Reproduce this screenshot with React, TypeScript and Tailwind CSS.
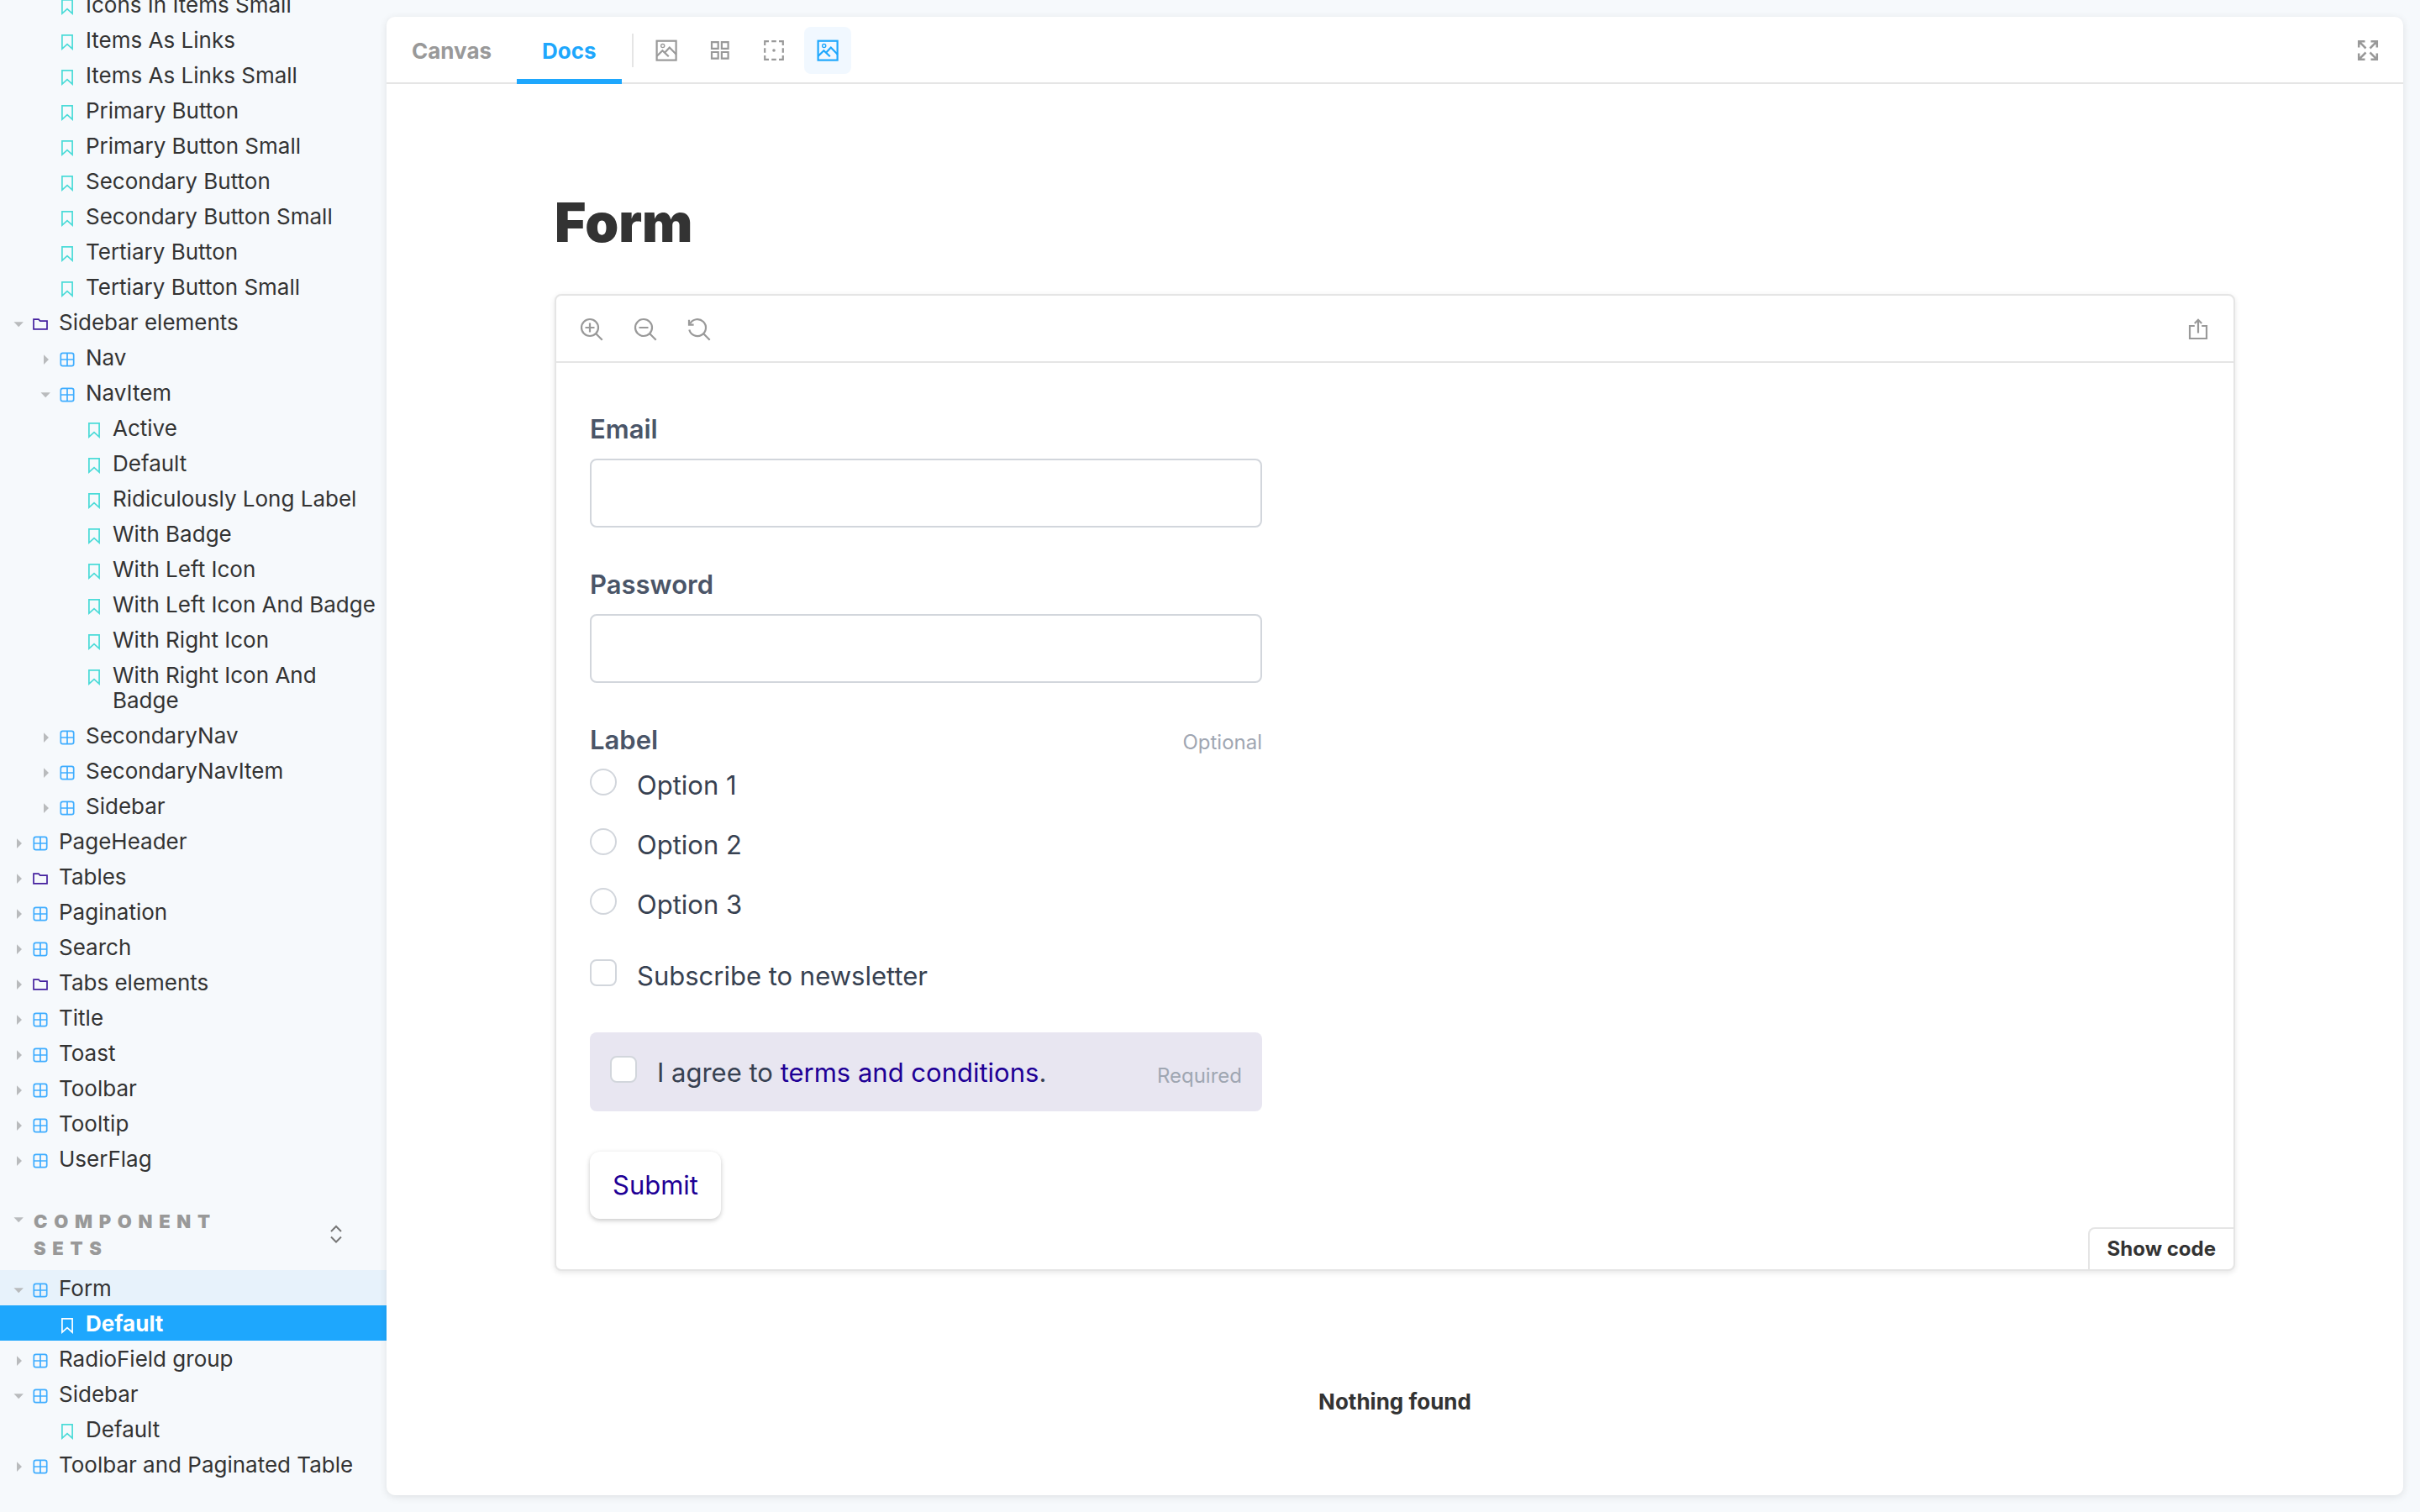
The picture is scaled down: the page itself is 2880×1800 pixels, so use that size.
import React from 'react';

type Kind = 'folder' | 'component' | 'story';
type Item = {
  label: string;
  kind: Kind;
  level: 0 | 1 | 2;
  open?: boolean;
  state?: 'parent' | 'selected';
};

const libraryItems: Item[] = [
  { label: 'Icons In Items Small', kind: 'story', level: 1 },
  { label: 'Items As Links', kind: 'story', level: 1 },
  { label: 'Items As Links Small', kind: 'story', level: 1 },
  { label: 'Primary Button', kind: 'story', level: 1 },
  { label: 'Primary Button Small', kind: 'story', level: 1 },
  { label: 'Secondary Button', kind: 'story', level: 1 },
  { label: 'Secondary Button Small', kind: 'story', level: 1 },
  { label: 'Tertiary Button', kind: 'story', level: 1 },
  { label: 'Tertiary Button Small', kind: 'story', level: 1 },
  { label: 'Sidebar elements', kind: 'folder', level: 0, open: true },
  { label: 'Nav', kind: 'component', level: 1 },
  { label: 'NavItem', kind: 'component', level: 1, open: true },
  { label: 'Active', kind: 'story', level: 2 },
  { label: 'Default', kind: 'story', level: 2 },
  { label: 'Ridiculously Long Label', kind: 'story', level: 2 },
  { label: 'With Badge', kind: 'story', level: 2 },
  { label: 'With Left Icon', kind: 'story', level: 2 },
  { label: 'With Left Icon And Badge', kind: 'story', level: 2 },
  { label: 'With Right Icon', kind: 'story', level: 2 },
  { label: 'With Right Icon And Badge', kind: 'story', level: 2 },
  { label: 'SecondaryNav', kind: 'component', level: 1 },
  { label: 'SecondaryNavItem', kind: 'component', level: 1 },
  { label: 'Sidebar', kind: 'component', level: 1 },
  { label: 'PageHeader', kind: 'component', level: 0 },
  { label: 'Tables', kind: 'folder', level: 0 },
  { label: 'Pagination', kind: 'component', level: 0 },
  { label: 'Search', kind: 'component', level: 0 },
  { label: 'Tabs elements', kind: 'folder', level: 0 },
  { label: 'Title', kind: 'component', level: 0 },
  { label: 'Toast', kind: 'component', level: 0 },
  { label: 'Toolbar', kind: 'component', level: 0 },
  { label: 'Tooltip', kind: 'component', level: 0 },
  { label: 'UserFlag', kind: 'component', level: 0 },
];

const setItems: Item[] = [
  { label: 'Form', kind: 'component', level: 0, open: true, state: 'parent' },
  { label: 'Default', kind: 'story', level: 1, state: 'selected' },
  { label: 'RadioField group', kind: 'component', level: 0 },
  { label: 'Sidebar', kind: 'component', level: 0, open: true },
  { label: 'Default', kind: 'story', level: 1 },
  { label: 'Toolbar and Paginated Table', kind: 'component', level: 0 },
];

const indent = { 0: 'pl-4', 1: 'pl-12', 2: 'pl-20' };

function Caret({ open }: { open?: boolean }) {
  return (
    <svg className="size-3 shrink-0" viewBox="0 0 12 12" fill="#b9bbbd" aria-hidden="true">
      {open ? <path d="M0.5 3.2h11.4L6.2 9.2z" /> : <path d="M4 0.2v11.8L10 6.1z" />}
    </svg>
  );
}

function KindIcon({ kind, selected }: { kind: Kind; selected?: boolean }) {
  if (kind === 'folder') {
    return (
      <svg className="size-5" viewBox="0 0 20 20" fill="none" stroke="#44209e" strokeWidth="1.7" aria-hidden="true">
        <path d="M2 4.2h6l1.8 2h8.2v9.6H2z" />
      </svg>
    );
  }
  if (kind === 'component') {
    return (
      <svg className="size-5" viewBox="0 0 20 20" fill="none" stroke="#3fadff" strokeWidth="1.7" aria-hidden="true">
        <rect x="2.3" y="2.3" width="15.4" height="15.4" rx="2.4" />
        <path d="M10 2.3v15.4M2.3 10h15.4" />
      </svg>
    );
  }
  return (
    <svg
      className={selected ? 'size-5 text-white' : 'size-5 text-[#4bdbd8]'}
      viewBox="0 0 20 20"
      fill="none"
      stroke="currentColor"
      strokeWidth="1.7"
      aria-hidden="true"
    >
      <path d="M3.9 1.9h12.2v16.2L10 12.6l-6.1 5.5z" />
    </svg>
  );
}

function TreeRow({ item }: { item: Item }) {
  const selected = item.state === 'selected';
  const tone = selected
    ? 'bg-[#1ea7fd] font-bold text-white'
    : item.state === 'parent'
      ? 'bg-[#e7f2fb] text-[#333]'
      : 'text-[#333]';
  return (
    <li>
      <a href="#" className={`flex items-start pr-1 ${indent[item.level]} ${tone}`}>
        <span className="-mb-3 flex h-12 w-[52px] shrink-0 items-center gap-[10px]">
          {item.kind === 'story' ? <span className="w-3 shrink-0" /> : <Caret open={item.open} />}
          <KindIcon kind={item.kind} selected={selected} />
        </span>
        <span className="pt-[7px] pb-[5px] pl-[2px] text-[26px] leading-[30px]">{item.label}</span>
      </a>
    </li>
  );
}

function Sidebar() {
  return (
    <nav aria-label="Stories" className="w-[460px] shrink-0 overflow-hidden">
      <ul className="-mt-4">
        {libraryItems.map((item, i) => (
          <TreeRow key={i} item={item} />
        ))}
      </ul>
      <div className="mt-[38px] mb-[10px] flex items-center justify-between pr-[50px] pl-4">
        <button
          type="button"
          className="flex max-w-[270px] items-start gap-3 text-left text-[22px] leading-8 font-black tracking-[0.35em] text-[#999] uppercase"
        >
          <span className="flex h-7 items-center">
            <Caret open />
          </span>
          <span>Component sets</span>
        </button>
        <button type="button" aria-label="Expand all">
          <svg className="h-6 w-5" viewBox="0 0 20 24" fill="none" stroke="#777" strokeWidth="2" aria-hidden="true">
            <path d="M4 8l6-6 6 6M4 14.5l6 6 6-6" />
          </svg>
        </button>
      </div>
      <ul>
        {setItems.map((item, i) => (
          <TreeRow key={i} item={item} />
        ))}
      </ul>
    </nav>
  );
}

function ToolButton({ label, active, children }: { label: string; active?: boolean; children: React.ReactNode }) {
  return (
    <button
      type="button"
      aria-label={label}
      className={`flex size-14 items-center justify-center rounded-lg ${active ? 'bg-[#f1f8ff] text-[#1ea7fd]' : 'text-[#999]'}`}
    >
      <svg className="size-7" viewBox="0 0 28 28" fill="none" stroke="currentColor" strokeWidth="2.2" aria-hidden="true">
        {children}
      </svg>
    </button>
  );
}

function PhotoShape() {
  return (
    <>
      <rect x="2.6" y="2.7" width="23" height="22.9" />
      <circle cx="9.7" cy="8.6" r="2.1" strokeWidth="1.3" />
      <path d="M2.7 20.8L9.4 14.2l7.4 7M11.8 17l6-6.5 8 8.3" />
    </>
  );
}

function TopBar() {
  return (
    <header className="flex h-20 items-center justify-between pr-[14px] shadow-[inset_0_-2px_0_#e5e5e5]">
      <div className="flex items-center">
        <div role="tablist" className="flex text-[26px] leading-8 font-bold">
          <button type="button" role="tab" aria-selected="false" className="h-20 px-[30px] pt-[2px] text-[#999]">
            Canvas
          </button>
          <button
            type="button"
            role="tab"
            aria-selected="true"
            className="h-20 px-[30px] pt-[2px] text-[#1ea7fd] shadow-[inset_0_-6px_0_#1ea7fd]"
          >
            Docs
          </button>
        </div>
        <div className="mr-[11px] ml-3 h-10 w-[2px] bg-[#e5e5e5]" />
        <div className="flex gap-2">
          <ToolButton label="Change background">
            <PhotoShape />
          </ToolButton>
          <ToolButton label="Apply a grid">
            <path d="M4 4.1h7.7v7.7H4zM15.9 4.1h7.7v7.7h-7.7zM4 16h7.7v7.7H4zM15.9 16h7.7v7.7h-7.7z" />
          </ToolButton>
          <ToolButton label="Apply outlines">
            <path d="M3.2 8V3.2H8M11.2 3.2h5.6M20 3.2h4.8V8M24.8 11.2v5.6M24.8 20v4.8H20M16.8 24.8h-5.6M8 24.8H3.2V20M3.2 16.8v-5.6" />
            <circle cx="14" cy="14" r="1.8" fill="currentColor" stroke="none" />
          </ToolButton>
          <ToolButton label="Toggle theme" active>
            <PhotoShape />
          </ToolButton>
        </div>
      </div>
      <ToolButton label="Go full screen">
        <path
          d="M3.2 10.5V3.2h7.3M3.2 3.2l8.3 8.3M17.5 3.2h7.3v7.3M24.8 3.2l-8.3 8.3M3.2 17.5v7.3h7.3M3.2 24.8l8.3-8.3M17.5 24.8h7.3v-7.3M24.8 24.8l-8.3-8.3"
          strokeWidth="2.5"
        />
      </ToolButton>
    </header>
  );
}

function TextField({ id, label, type }: { id: string; label: string; type: string }) {
  return (
    <div>
      <label htmlFor={id} className="block text-[31px] leading-[48px] font-semibold text-[#4a5568]">
        {label}
      </label>
      <input id={id} type={type} className="mt-[11px] block h-[82px] w-full rounded-lg border-2 border-[#d2d6dc] bg-white px-6 text-[31px]" />
    </div>
  );
}

function Choice({ id, type, name, children }: { id: string; type: 'radio' | 'checkbox'; name?: string; children: React.ReactNode }) {
  return (
    <div className="flex items-start gap-6 text-[31px] leading-[48px] text-[#374151]">
      <input
        id={id}
        type={type}
        name={name}
        className={`mt-1 size-8 shrink-0 appearance-none border-2 border-[#d2d6dc] bg-white ${type === 'radio' ? 'rounded-full' : 'rounded-lg'}`}
      />
      <label htmlFor={id}>{children}</label>
    </div>
  );
}

function ExampleForm() {
  return (
    <form className="w-[800px] max-w-full" onSubmit={(e) => e.preventDefault()}>
      <div className="flex flex-col gap-11">
        <TextField id="email" label="Email" type="email" />
        <TextField id="password" label="Password" type="password" />
        <fieldset aria-labelledby="options-label">
          <div className="flex items-baseline justify-between">
            <span id="options-label" className="text-[31px] leading-[48px] font-semibold text-[#4a5568]">
              Label
            </span>
            <span className="text-2xl text-[#9fa6b2]">Optional</span>
          </div>
          <div className="mt-[6px] flex flex-col gap-[23px]">
            <Choice id="option-1" type="radio" name="option">Option 1</Choice>
            <Choice id="option-2" type="radio" name="option">Option 2</Choice>
            <Choice id="option-3" type="radio" name="option">Option 3</Choice>
          </div>
        </fieldset>
      </div>
      <div className="mt-[37px]">
        <Choice id="newsletter" type="checkbox">Subscribe to newsletter</Choice>
      </div>
      <div className="mt-[43px] flex items-baseline justify-between rounded-lg bg-[#e8e6f1] px-6 pt-6 pb-[22px]">
        <Choice id="terms" type="checkbox">
          I agree to <a href="#" className="text-[#1e0096]">terms and conditions</a>.
        </Choice>
        <span className="text-2xl text-[#9fa6b2]">Required</span>
      </div>
      <button
        type="submit"
        className="mt-12 h-20 rounded-xl bg-white px-[27px] text-[31px] leading-[48px] text-[#1e0096] shadow-[0_2px_6px_rgba(0,0,0,0.15),0_2px_4px_rgba(0,0,0,0.08)]"
      >
        Submit
      </button>
    </form>
  );
}

function Preview() {
  return (
    <section className="mt-[53px] rounded-lg border-2 border-[#e5e5e5] bg-white shadow-[0_2px_6px_rgba(0,0,0,0.1)]">
      <div className="flex h-20 items-center justify-between px-[14px] shadow-[inset_0_-2px_0_#e5e5e5]">
        <div className="flex gap-2">
          <ToolButton label="Zoom in">
            <path d="M6.5 12h11M12 6.5v11M19 19l7.7 7.7" />
            <circle cx="12" cy="12" r="10" />
          </ToolButton>
          <ToolButton label="Zoom out">
            <path d="M6.5 12h11M19 19l7.7 7.7" />
            <circle cx="12" cy="12" r="10" />
          </ToolButton>
          <ToolButton label="Reset zoom">
            <path d="M3.2 7.4A10 10 0 1 1 2.3 14.5M19 19l7.7 7.7" />
            <path d="M2 2.8v5.8h5.6" />
          </ToolButton>
        </div>
        <ToolButton label="Open canvas in new tab">
          <path d="M9.8 10H4v15h20V10h-5.8M14 18.5V3M9.8 7L14 2.8 18.2 7" />
        </ToolButton>
      </div>
      <div className="relative px-10 pt-[55px] pb-[60px]">
        <ExampleForm />
        <button
          type="button"
          className="absolute right-0 bottom-0 h-[50px] rounded-tl-lg border-t-2 border-l-2 border-[#e5e5e5] px-[21px] text-2xl leading-8 font-bold text-[#333]"
        >
          Show code
        </button>
      </div>
    </section>
  );
}

export default function App() {
  return (
    <div className="flex h-screen overflow-hidden bg-[#f6f9fc] font-['Inter','Liberation_Sans',sans-serif]">
      <Sidebar />
      <div className="relative min-w-0 flex-1 py-5 pr-5">
        <div className="flex h-full flex-col rounded-[10px] bg-white shadow-[0_2px_10px_rgba(0,0,0,0.1)]">
          <TopBar />
          <main className="min-h-0 flex-1 overflow-hidden px-10">
            <div className="mx-auto max-w-[2000px]">
              <h1 className="pt-[133px] text-[64px] leading-[64px] font-black text-[#333]">Form</h1>
              <Preview />
              <p className="mt-[140px] text-center text-[26px] leading-8 font-bold text-[#333]">Nothing found</p>
            </div>
          </main>
        </div>
      </div>
    </div>
  );
}
